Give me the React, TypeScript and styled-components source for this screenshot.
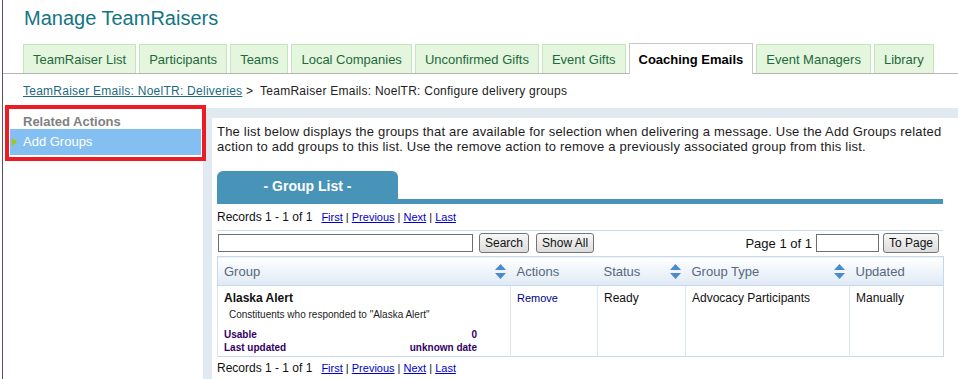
import React from "react"
import styled, { createGlobalStyle } from "styled-components"

const GlobalStyle = createGlobalStyle`
  body {
    margin: 0;
    background: #fff;
    font-family: "Liberation Sans", Arial, sans-serif;
  }
`

const tabs = [
  "TeamRaiser List",
  "Participants",
  "Teams",
  "Local Companies",
  "Unconfirmed Gifts",
  "Event Gifts",
  "Coaching Emails",
  "Event Managers",
  "Library",
]

const columns = [
  { label: "Group", width: 293, sort: true },
  { label: "Actions", width: 87, sort: false },
  { label: "Status", width: 88, sort: true },
  { label: "Group Type", width: 164, sort: true },
  { label: "Updated", width: 94, sort: false },
]

const SortIcon: React.FC = () => (
  <svg width="11" height="15" viewBox="0 0 11 15">
    <path d="M5.5 0 L11 6 L0 6 Z" fill="#4a8bd0" />
    <path d="M0 9 L11 9 L5.5 15 Z" fill="#4a8bd0" />
  </svg>
)

const Pager: React.FC<{ top: number }> = ({ top }) => (
  <S.Records top={top}>
    Records 1 - 1 of 1
    <S.PagerLinks>
      <a href="#">First</a> | <a href="#">Previous</a> | <a href="#">Next</a> | <a href="#">Last</a>
    </S.PagerLinks>
  </S.Records>
)

export default function App() {
  return (
    <>
      <GlobalStyle />
      <S.Page>
        <S.Title>Manage TeamRaisers</S.Title>
        <S.TabBar>
          {tabs.map((t) => (
            <S.Tab key={t} active={t === "Coaching Emails"}>
              {t}
            </S.Tab>
          ))}
        </S.TabBar>
        <S.Breadcrumb>
          <a href="#">TeamRaiser Emails: NoelTR: Deliveries</a> &gt;&nbsp; TeamRaiser Emails: NoelTR: Configure delivery groups
        </S.Breadcrumb>
        <S.Main>
          <S.Sidebar>
            <S.ActionsBox>
              <S.ActionsTitle>Related Actions</S.ActionsTitle>
              <S.ActionItem>Add Groups</S.ActionItem>
            </S.ActionsBox>
          </S.Sidebar>
          <S.Content>
            <S.Panel>
              <S.Intro>
                The list below displays the groups that are available for selection when delivering a message. Use the Add Groups related
                action to add groups to this list. Use the remove action to remove a previously associated group from this list.
              </S.Intro>
              <S.ListTab>- Group List -</S.ListTab>
              <S.ListBar />
              <Pager top={6} />
              <S.Toolbar>
                <S.TextInput width={255} />
                <S.Button>Search</S.Button>
                <S.Button>Show All</S.Button>
                <S.Spacer />
                <S.PageJump>
                  <S.PageLabel>Page 1 of 1</S.PageLabel>
                  <S.TextInput width={63} />
                  <S.Button>To Page</S.Button>
                </S.PageJump>
              </S.Toolbar>
              <S.Table>
                <thead>
                  <tr>
                    {columns.map((c) => (
                      <S.Th key={c.label} style={{ width: c.width }}>
                        <S.ThInner>
                          {c.label}
                          {c.sort && <SortIcon />}
                        </S.ThInner>
                      </S.Th>
                    ))}
                  </tr>
                </thead>
                <tbody>
                  <tr>
                    <S.Td>
                      <S.GroupName>Alaska Alert</S.GroupName>
                      <S.GroupDesc>Constituents who responded to "Alaska Alert"</S.GroupDesc>
                      <S.Meta>
                        <span>Usable</span>
                        <S.MetaValue>0</S.MetaValue>
                        <span>Last updated</span>
                        <S.MetaValue>unknown date</S.MetaValue>
                      </S.Meta>
                    </S.Td>
                    <S.Td>
                      <S.RemoveLink href="#">Remove</S.RemoveLink>
                    </S.Td>
                    <S.Td>Ready</S.Td>
                    <S.Td>Advocacy Participants</S.Td>
                    <S.Td>Manually</S.Td>
                  </tr>
                </tbody>
              </S.Table>
              <Pager top={4} />
            </S.Panel>
          </S.Content>
        </S.Main>
      </S.Page>
    </>
  )
}

const S = {
  Page: styled.div`
    margin-left: 2px;
    border-left: 1px solid #5f5161;
    min-height: 379px;
    box-sizing: border-box;
    overflow: hidden;
  `,
  Title: styled.h1`
    margin: 0;
    padding: 6px 0 0 21px;
    font-size: 20px;
    font-weight: normal;
    line-height: 24px;
    color: #137584;
  `,
  TabBar: styled.div`
    display: flex;
    align-items: flex-end;
    gap: 3px;
    margin-top: 13px;
    padding-left: 20px;
    height: 30px;
    border-bottom: 1px solid #b5b5b5;
  `,
  Tab: styled.div<{ active?: boolean }>`
    display: flex;
    align-items: center;
    box-sizing: border-box;
    height: ${({ active }) => (active ? "31px" : "29px")};
    margin-bottom: ${({ active }) => (active ? "-1px" : "0")};
    padding: 0 9px;
    font-size: 13px;
    font-weight: ${({ active }) => (active ? "bold" : "normal")};
    color: ${({ active }) => (active ? "#000" : "#22693a")};
    background: ${({ active }) => (active ? "#fff" : "#e5f6df")};
    border: 1px solid ${({ active }) => (active ? "#c8c8c8" : "#c2e5b9")};
    border-bottom: 0;
  `,
  Breadcrumb: styled.div`
    padding: 10px 0 9px 20px;
    font-size: 12px;
    letter-spacing: 0.25px;
    line-height: 15px;
    color: #222;
    a {
      color: #1a6c7e;
      text-decoration: underline;
    }
  `,
  Main: styled.div`
    display: flex;
    align-items: stretch;
  `,
  Sidebar: styled.div`
    width: 200px;
    flex: none;
    position: relative;
    z-index: 1;
  `,
  ActionsBox: styled.div`
    margin: 1px 0 0 6px;
    width: 193px;
    height: 48px;
    box-sizing: border-box;
    outline: 4px solid #ec1c24;
  `,
  ActionsTitle: styled.div`
    padding: 6px 0 0 14px;
    font-size: 13px;
    font-weight: bold;
    line-height: 14px;
    color: #808080;
  `,
  ActionItem: styled.div`
    position: relative;
    margin: 0 1px;
    height: 26px;
    padding-left: 13px;
    background: #84bff1;
    color: #fff;
    font-size: 13px;
    line-height: 26px;
    &::before {
      content: "";
      position: absolute;
      left: 2px;
      top: 9px;
      border-left: 5px solid #a6c800;
      border-top: 4px solid transparent;
      border-bottom: 4px solid transparent;
    }
  `,
  Content: styled.div`
    flex: 1;
    min-width: 0;
    background: #e1e9f1;
    padding: 10px 0 0 9px;
  `,
  Panel: styled.div`
    background: #fff;
    width: 726px;
    padding: 6px 15px 4px 5px;
  `,
  Intro: styled.p`
    margin: 0;
    font-size: 13px;
    letter-spacing: 0.2px;
    line-height: 15px;
    color: #1c1c1c;
  `,
  ListTab: styled.div`
    margin-top: 17px;
    width: 181px;
    height: 28px;
    background: #4893b8;
    border-radius: 6px 6px 0 0;
    color: #fff;
    font-size: 14px;
    font-weight: bold;
    line-height: 30px;
    text-align: center;
  `,
  ListBar: styled.div`
    height: 5px;
    background: #4893b8;
  `,
  Records: styled.div<{ top: number }>`
    padding-top: ${({ top }) => top}px;
    font-size: 12px;
    line-height: 15px;
    color: #111;
  `,
  PagerLinks: styled.span`
    margin-left: 9px;
    font-size: 11px;
    a {
      color: #0000cc;
      text-decoration: underline;
    }
  `,
  Toolbar: styled.div`
    display: flex;
    align-items: center;
    gap: 6px;
    margin-top: 5px;
    padding: 2px 3px 3px 1px;
    border-top: 1px solid #c9d9e9;
    font-size: 12px;
    color: #111;
  `,
  PageJump: styled.div`
    display: flex;
    align-items: center;
    gap: 4px;
  `,
  PageLabel: styled.span`
    font-size: 13px;
  `,
  Spacer: styled.div`
    flex: 1;
  `,
  TextInput: styled.input<{ width: number }>`
    box-sizing: border-box;
    width: ${({ width }) => width}px;
    height: 18px;
    border: 1px solid #6e6e6e;
    padding: 0 2px;
    margin: 0;
  `,
  Button: styled.button`
    height: 20px;
    padding: 0 5px;
    margin: 0 1px 0 0;
    font-family: "Liberation Sans", Arial, sans-serif;
    font-size: 12px;
    color: #111;
    background: linear-gradient(#f7f7f7, #dcdcdc);
    border: 1px solid #747474;
    border-radius: 3px;
  `,
  Table: styled.table`
    width: 100%;
    border-collapse: collapse;
    border: 1px solid #c6d8ea;
    table-layout: fixed;
  `,
  Th: styled.th`
    box-sizing: border-box;
    height: 29px;
    padding: 0 5px 0 6px;
    text-align: left;
    font-size: 13px;
    font-weight: normal;
    color: #56687d;
    background: linear-gradient(#ffffff, #dfe9f4);
    border-bottom: 1px solid #c6d8ea;
  `,
  ThInner: styled.div`
    display: flex;
    align-items: center;
    justify-content: space-between;
    svg {
      display: block;
    }
  `,
  Td: styled.td`
    padding: 5px 6px 2px;
    vertical-align: top;
    font-size: 12px;
    line-height: 14px;
    color: #111;
    border-left: 1px solid #dde5ed;
  `,
  GroupName: styled.div`
    font-weight: bold;
    font-size: 12px;
    line-height: 14px;
  `,
  GroupDesc: styled.div`
    margin-top: 3px;
    padding-left: 5px;
    font-size: 10px;
    line-height: 14px;
    color: #222;
  `,
  Meta: styled.div`
    display: grid;
    grid-template-columns: 1fr auto;
    width: 253px;
    margin-top: 6px;
    font-size: 10px;
    font-weight: bold;
    line-height: 13px;
    color: #330066;
  `,
  MetaValue: styled.span`
    text-align: right;
  `,
  RemoveLink: styled.a`
    font-size: 11px;
    color: #000088;
    text-decoration: none;
  `,
}
